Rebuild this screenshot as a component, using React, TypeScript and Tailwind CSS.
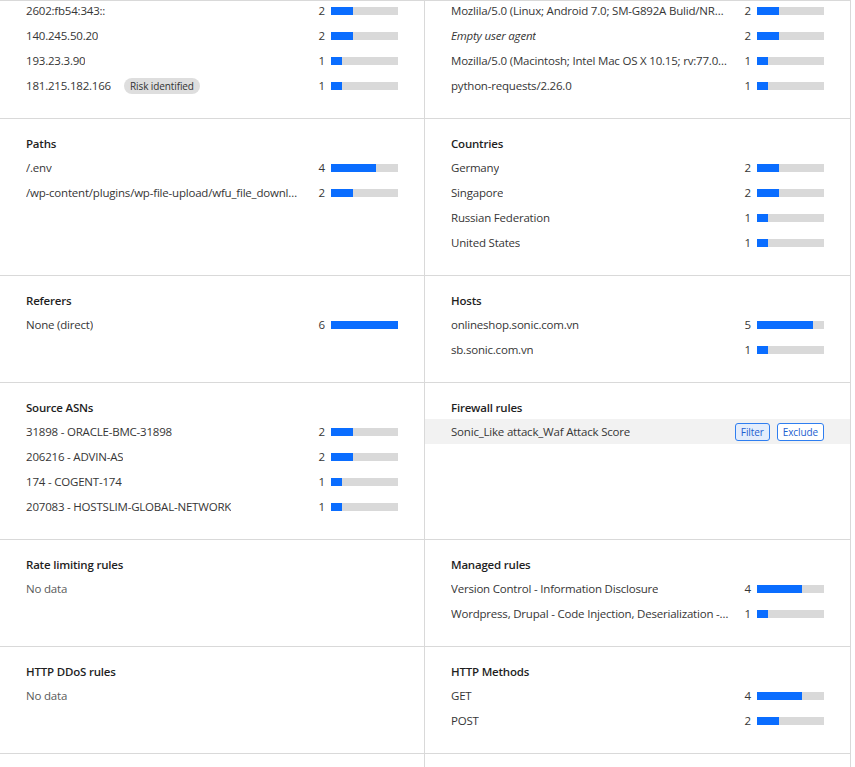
import React from "react";

type Row = {
  label: string;
  count?: number;
  italic?: boolean;
  badge?: string;
  actions?: boolean;
  highlight?: boolean;
};

type Section = { title: string; rows: Row[]; empty?: boolean };

const TOTAL = 6;

const grid: [Section, Section][] = [
  [
    {
      title: "Source IPs",
      rows: [
        { label: "2602:fb54:343::", count: 2 },
        { label: "140.245.50.20", count: 2 },
        { label: "193.23.3.90", count: 1 },
        { label: "181.215.182.166", count: 1, badge: "Risk identified" },
      ],
    },
    {
      title: "User agents",
      rows: [
        {
          label:
            "Mozlila/5.0 (Linux; Android 7.0; SM-G892A Bulid/NRD90M; wv) AppleWebKit/537.36",
          count: 2,
        },
        { label: "Empty user agent", count: 2, italic: true },
        {
          label:
            "Mozilla/5.0 (Macintosh; Intel Mac OS X 10.15; rv:77.0) Gecko/20100101 Firefox/77.0",
          count: 1,
        },
        { label: "python-requests/2.26.0", count: 1 },
      ],
    },
  ],
  [
    {
      title: "Paths",
      rows: [
        { label: "/.env", count: 4 },
        {
          label: "/wp-content/plugins/wp-file-upload/wfu_file_downloader.php",
          count: 2,
        },
      ],
    },
    {
      title: "Countries",
      rows: [
        { label: "Germany", count: 2 },
        { label: "Singapore", count: 2 },
        { label: "Russian Federation", count: 1 },
        { label: "United States", count: 1 },
      ],
    },
  ],
  [
    { title: "Referers", rows: [{ label: "None (direct)", count: 6 }] },
    {
      title: "Hosts",
      rows: [
        { label: "onlineshop.sonic.com.vn", count: 5 },
        { label: "sb.sonic.com.vn", count: 1 },
      ],
    },
  ],
  [
    {
      title: "Source ASNs",
      rows: [
        { label: "31898 - ORACLE-BMC-31898", count: 2 },
        { label: "206216 - ADVIN-AS", count: 2 },
        { label: "174 - COGENT-174", count: 1 },
        { label: "207083 - HOSTSLIM-GLOBAL-NETWORK", count: 1 },
      ],
    },
    {
      title: "Firewall rules",
      rows: [
        {
          label: "Sonic_Like attack_Waf Attack Score",
          actions: true,
          highlight: true,
        },
      ],
    },
  ],
  [
    { title: "Rate limiting rules", rows: [], empty: true },
    {
      title: "Managed rules",
      rows: [
        { label: "Version Control - Information Disclosure", count: 4 },
        {
          label:
            "Wordpress, Drupal - Code Injection, Deserialization - Remote Code Execution",
          count: 1,
        },
      ],
    },
  ],
  [
    { title: "HTTP DDoS rules", rows: [], empty: true },
    {
      title: "HTTP Methods",
      rows: [
        { label: "GET", count: 4 },
        { label: "POST", count: 2 },
      ],
    },
  ],
  [
    {
      title: "HTTP Versions",
      rows: [{ label: "HTTP/1.1", count: 6 }],
    },
    {
      title: "Cache status",
      rows: [{ label: "dynamic", count: 6 }],
    },
  ],
];

function Bar({ count }: { count: number }) {
  return (
    <div className="w-[67px] h-[8px] bg-[#d9d9d9] shrink-0">
      <div
        className="h-full bg-[#0a6dff]"
        style={{ width: `${(count / TOTAL) * 100}%` }}
      />
    </div>
  );
}

function RowView({ row }: { row: Row }) {
  return (
    <div
      className={`flex items-center h-[25px] px-[26px] ${
        row.highlight ? "bg-[#f2f2f2]" : ""
      }`}
    >
      <div className="flex-1 min-w-0 flex items-center">
        <span className={`truncate ${row.italic ? "italic" : ""}`}>
          {row.label}
        </span>
        {row.badge && (
          <span className="ml-[13px] shrink-0 h-[16px] px-[6px] rounded-full bg-[#dedede] text-[#333] text-[10px] tracking-[-0.1px] leading-[16px]">
            {row.badge}
          </span>
        )}
      </div>
      {row.actions ? (
        <div className="flex items-center gap-[7px] shrink-0">
          <button className="h-[18px] px-[5px] rounded-[3px] border border-[#2f7ef0] bg-[#e3edfc] text-[#1e5fd0] text-[10px] tracking-[-0.1px] leading-[16px]">
            Filter
          </button>
          <button className="h-[18px] px-[5px] rounded-[3px] border border-[#2f7ef0] bg-white text-[#1e5fd0] text-[10px] tracking-[-0.1px] leading-[16px]">
            Exclude
          </button>
        </div>
      ) : (
        <>
          <span className="w-[22px] text-right shrink-0 mr-[6px]">
            {row.count}
          </span>
          <Bar count={row.count ?? 0} />
        </>
      )}
    </div>
  );
}

function SectionView({ s, left }: { s: Section; left: boolean }) {
  return (
    <div
      className={`pt-[13px] pb-[20px] border-b border-[#d9d9d9] ${
        left ? "border-r" : ""
      }`}
    >
      <div className="px-[26px] h-[23px] leading-[24px] font-semibold text-[#1f1f1f]">
        {s.title}
      </div>
      {s.empty ? (
        <div className="px-[26px] h-[25px] leading-[25px] text-[#5a5a5a]">
          No data
        </div>
      ) : (
        s.rows.map((r, i) => <RowView key={i} row={r} />)
      )}
    </div>
  );
}

export default function App() {
  return (
    <div
      className="w-[855px] h-[767px] overflow-hidden bg-white text-[11.5px] tracking-[-0.2px] text-[#363636]"
      style={{ fontFamily: '"Open Sans", "Noto Sans", sans-serif' }}
    >
      <div className="w-[851px] h-full border-t border-r border-[#d9d9d9] overflow-hidden">
        <div className="grid grid-cols-2 -mt-[39px]">
          {grid.map(([a, b], i) => (
            <React.Fragment key={i}>
              <SectionView s={a} left />
              <SectionView s={b} left={false} />
            </React.Fragment>
          ))}
        </div>
      </div>
    </div>
  );
}
